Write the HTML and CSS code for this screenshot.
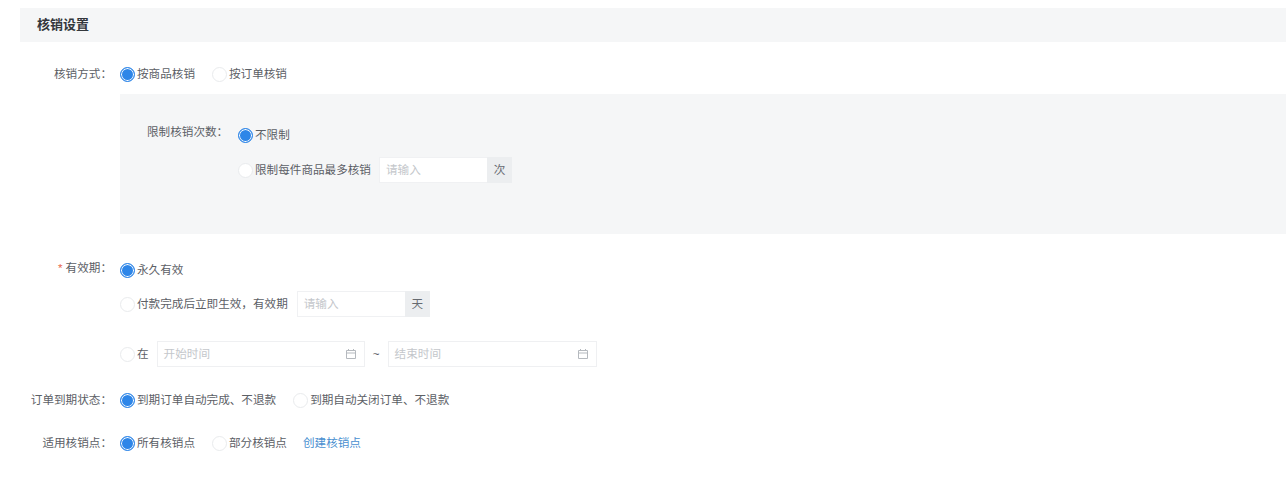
FILE: index.html
```html
<!DOCTYPE html>
<html lang="zh">

<head>
    <meta charset="UTF-8">
    <title>核销设置</title>
    <link rel="stylesheet" href="styles.css">
</head>

<body>
    <div class="titulo">核销设置</div>

    <div class="fila fila-modo">
        <div class="etiqueta">核销方式：</div>
        <label class="radio activo">按商品核销</label>
        <label class="radio radio-sig">按订单核销</label>
    </div>

    <div class="panel">
        <div class="panel-etiqueta">限制核销次数：</div>
        <div class="panel-opciones">
            <label class="radio activo">不限制</label>
            <div class="linea">
                <label class="radio">限制每件商品最多核销</label>
                <div class="entrada">
                    <span class="hint">请输入</span>
                    <span class="sufijo">次</span>
                </div>
            </div>
        </div>
    </div>

    <div class="fila fila-validez">
        <div class="etiqueta"><span class="req">*</span> 有效期：</div>
        <div class="columna">
            <label class="radio activo">永久有效</label>
            <div class="linea linea-dias">
                <label class="radio">付款完成后立即生效，有效期</label>
                <div class="entrada">
                    <span class="hint">请输入</span>
                    <span class="sufijo">天</span>
                </div>
            </div>
            <div class="linea linea-fechas">
                <label class="radio">在</label>
                <div class="fecha">
                    <span class="hint">开始时间</span>
                    <svg class="cal" viewBox="0 0 12 12"><path d="M1.5 2.5h9v8h-9zM1.5 5h9M3.5 1v2M8.5 1v2" fill="none" stroke="#b5b9be"/></svg>
                </div>
                <span class="tilde">~</span>
                <div class="fecha">
                    <span class="hint">结束时间</span>
                    <svg class="cal" viewBox="0 0 12 12"><path d="M1.5 2.5h9v8h-9zM1.5 5h9M3.5 1v2M8.5 1v2" fill="none" stroke="#b5b9be"/></svg>
                </div>
            </div>
        </div>
    </div>

    <div class="fila fila-estado">
        <div class="etiqueta">订单到期状态：</div>
        <label class="radio activo">到期订单自动完成、不退款</label>
        <label class="radio radio-sig">到期自动关闭订单、不退款</label>
    </div>

    <div class="fila fila-puntos">
        <div class="etiqueta">适用核销点：</div>
        <label class="radio activo">所有核销点</label>
        <label class="radio radio-sig">部分核销点</label>
        <a class="enlace">创建核销点</a>
    </div>
</body>
</html>
```

FILE: styles.css
```css
* {
    margin: 0;
    padding: 0;
    box-sizing: border-box;
    font-family: "Liberation Sans", "Noto Sans CJK SC", sans-serif;
}

body {
    background: #fff;
    color: #5c6066;
    font-size: 11.6px;
    line-height: 16px;
    padding-top: 8px;
    overflow: hidden;
}

.titulo {
    margin-left: 20px;
    height: 34px;
    line-height: 33px;
    padding-left: 17px;
    background: #f5f6f7;
    color: #33373c;
    font-size: 13px;
    font-weight: bold;
}

.fila {
    display: flex;
    align-items: center;
}

.fila-modo {
    margin-top: 24px;
}

.fila-validez {
    margin-top: 28px;
    align-items: flex-start;
}

.fila-estado {
    margin-top: 25px;
}

.fila-puntos {
    margin-top: 27px;
}

.etiqueta {
    width: 119px;
    padding-right: 7px;
    text-align: right;
    white-space: nowrap;
}

.fila-validez .etiqueta {
    margin-top: -2px;
}

.req {
    color: #e8694a;
}

.columna {
    display: flex;
    flex-direction: column;
}

.linea {
    display: flex;
    align-items: center;
}

.linea-dias {
    margin-top: 13px;
}

.linea-dias .entrada {
    margin-left: 9px;
}

.linea-fechas {
    margin-top: 24px;
}

/* radio hecho con css */
.radio {
    display: flex;
    align-items: center;
    white-space: nowrap;
}

.radio::before {
    content: "";
    width: 13px;
    height: 13px;
    margin: 0 2px 0 1px;
    flex: none;
    border: 1px solid #e9ebed;
    border-radius: 50%;
    background: #fff;
}

.radio.activo::before {
    border: 1px solid #2e86e8;
    background: #2e86e8;
    box-shadow: inset 0 0 0 1px #fff;
}

.radio-sig {
    margin-left: 16px;
}

.panel {
    display: flex;
    margin: 12px 0 0 120px;
    height: 140px;
    padding: 30px 0 0 27px;
    background: #f5f6f7;
}

.panel-etiqueta {
    width: 90px;
}

.panel-opciones {
    display: flex;
    flex-direction: column;
    padding-top: 3px;
}

.panel-opciones .linea {
    margin-top: 14px;
}

.entrada {
    display: flex;
    width: 133px;
    height: 26px;
    margin-left: 8px;
    background: #fff;
    border: 1px solid #f0f1f3;
}

.hint {
    flex: 1;
    padding-left: 6px;
    line-height: 24px;
    color: #c4c7cb;
}

.sufijo {
    width: 25px;
    margin: -1px -1px -1px 0;
    line-height: 26px;
    text-align: center;
    background: #eceef0;
    color: #666a70;
}

.fecha {
    display: flex;
    align-items: center;
    width: 208px;
    height: 26px;
    margin-left: 8px;
    border: 1px solid #eff0f2;
}

.fecha + .tilde + .fecha {
    width: 209px;
    margin-left: 0;
}

.cal {
    width: 12px;
    height: 12px;
    margin-right: 7px;
}

.tilde {
    width: 23px;
    text-align: center;
}

.enlace {
    margin-left: 16px;
    color: #4a8fd0;
}
```
